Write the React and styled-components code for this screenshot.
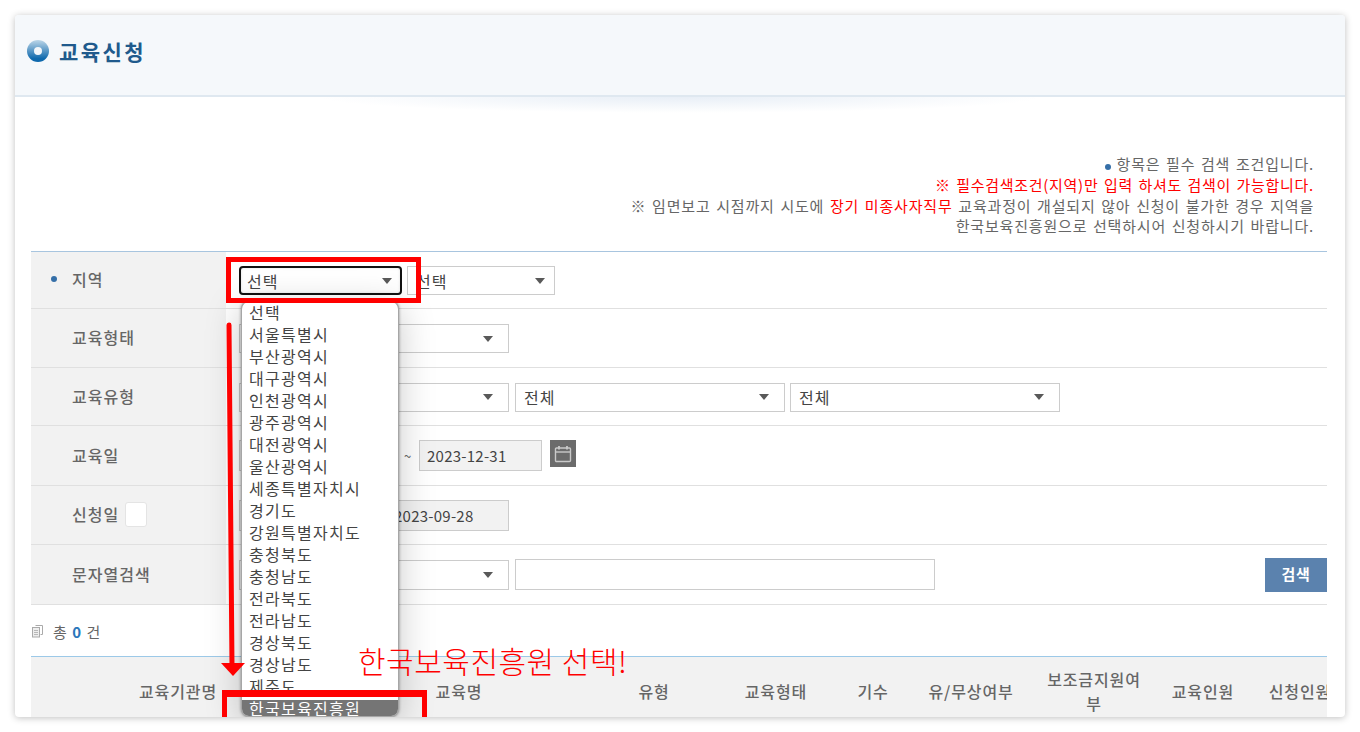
import React from 'react'
import styled, { createGlobalStyle } from 'styled-components'

const GlobalStyle = createGlobalStyle`
  html, body {
    margin: 0;
    height: 100%;
    overflow: hidden;
    background: #fff;
  }
  * { box-sizing: border-box; }
  body {
    font-family: "Noto Sans CJK KR", "Noto Sans", sans-serif;
    color: #555;
  }
`

const Page = styled.div`
  padding: 15px;
`
const Card = styled.div`
  position: relative;
  height: 702px;
  overflow: hidden;
  background: #fff;
  border-radius: 4px;
  box-shadow: 0 1px 7px rgba(0, 0, 0, 0.25);
`
const Header = styled.header`
  position: relative;
  height: 82px;
  display: flex;
  align-items: center;
  gap: 10px;
  padding: 0 12px 9px;
  background: #f5f8fb;
  border-bottom: 2px solid #dfe8f0;
  &::after {
    content: "";
    position: absolute;
    left: 300px;
    right: 300px;
    top: 82px;
    height: 16px;
    background: radial-gradient(ellipse at top, rgba(150, 180, 215, 0.22), rgba(255, 255, 255, 0) 70%);
  }
`
const Ring = styled.span`
  width: 22px;
  height: 22px;
  border-radius: 50%;
  display: flex;
  align-items: center;
  justify-content: center;
  background: linear-gradient(#bcd6e8, #0f69ad 85%);
  &::before {
    content: "";
    width: 8px;
    height: 8px;
    border-radius: 50%;
    background: #f2f6fa;
  }
`
const Title = styled.h1`
  margin: 0;
  font-size: 21px;
  font-weight: 700;
  letter-spacing: 2.4px;
  color: #205a8c;
`
const Main = styled.main`
  padding: 0 18px 0 16px;
`
const Notes = styled.div`
  padding: 57px 13px 14px 0;
  text-align: right;
  font-size: 15px;
  line-height: 20.75px;
  color: #666;
  letter-spacing: 0.82px;
  word-spacing: 1.5px;
`
const Red = styled.span`
  color: #f00;
  letter-spacing: ${(p) => (p.$tight ? '0.7px' : 'inherit')};
`
const Bullet = styled.i`
  display: inline-block;
  width: 6px;
  height: 6px;
  border-radius: 50%;
  background: #356fa8;
`
const Form = styled.div`
  border-top: 1px solid #a8c5df;
`
const Row = styled.div`
  display: flex;
  height: ${(p) => p.$h}px;
  border-bottom: 1px solid #e0e0e0;
`
const Label = styled.div`
  width: 195px;
  flex: none;
  display: flex;
  align-items: center;
  gap: ${(p) => (p.$required ? 15 : 6)}px;
  padding-left: ${(p) => (p.$required ? 20 : 41)}px;
  padding-bottom: 2px;
  background: #f2f2f2;
  font-size: 16px;
  font-weight: 500;
  letter-spacing: 1.05px;
  color: #666;
`
const Check = styled.span`
  width: 22px;
  height: 25px;
  background: #fff;
  border: 1px solid #e4e4e4;
  border-radius: 3px;
`
const Field = styled.div`
  flex: 1;
  display: flex;
  align-items: center;
  gap: 6px;
  padding-left: 13px;
`
const Select = styled.div`
  width: ${(p) => p.$w}px;
  height: ${(p) => (p.$flush ? 30 : 29)}px;
  flex: none;
  display: flex;
  align-items: center;
  justify-content: space-between;
  margin-top: ${(p) => (p.$flush ? 0 : 1)}px;
  margin-left: ${(p) => p.$ml || 0}px;
  padding: 0 ${(p) => p.$pr || 15}px 0 ${(p) => (p.$focus ? 6 : 8)}px;
  background: #fff;
  border: ${(p) => (p.$focus ? '2px solid #111' : '1px solid #ccc')};
  border-radius: ${(p) => (p.$focus ? 4 : 0)}px;
  box-shadow: ${(p) => (p.$focus ? 'inset 0 0 3px rgba(0, 0, 0, 0.12)' : 'none')};
  font-size: 16px;
  letter-spacing: 1px;
  color: #444;
`
const Caret = styled.span`
  width: 0;
  height: 0;
  border-left: 5px solid transparent;
  border-right: 5px solid transparent;
  border-top: 6px solid #595959;
`
const DateInput = styled.div`
  width: ${(p) => p.$w || 123}px;
  height: 31px;
  flex: none;
  display: flex;
  align-items: center;
  padding-left: 7px;
  background: #f2f2f2;
  border: 1px solid #ccc;
  font-size: 15px;
  letter-spacing: 0.25px;
  color: #444;
`
const Tilde = styled.span`
  width: 11px;
  flex: none;
  text-align: center;
  font-size: 13px;
  color: #666;
`
const CalButton = styled.span`
  width: 26px;
  height: 27px;
  flex: none;
  display: flex;
  align-items: center;
  justify-content: center;
  margin: 0 0 4px 2px;
  background: #6b6b6b;
`
const TextInput = styled.div`
  width: 420px;
  height: 31px;
  background: #fff;
  border: 1px solid #ccc;
`
const SearchButton = styled.button`
  width: 62px;
  height: 34px;
  margin-left: auto;
  padding: 0 0 3px;
  border: 0;
  background: #5b82ae;
  color: #fff;
  font-family: inherit;
  font-size: 15px;
  font-weight: 700;
  letter-spacing: 0.6px;
`
const Total = styled.div`
  height: 51px;
  display: flex;
  align-items: center;
  gap: 9px;
  padding-top: 1px;
  font-size: 15px;
  color: #666;
  letter-spacing: 1px;
  b {
    color: #2a77bb;
  }
`
const TableHead = styled.div`
  display: flex;
  height: 70px;
  overflow: hidden;
  background: #f2f2f2;
  border-top: 1px solid #9cc9e8;
`
const Th = styled.div`
  width: ${(p) => p.$w}px;
  flex: none;
  display: flex;
  align-items: center;
  justify-content: center;
  padding: 0 10px 2px;
  text-align: center;
  font-size: 16px;
  line-height: 24px;
  font-weight: 500;
  letter-spacing: 0.9px;
  color: #666;
`

// things drawn over the form: the open list and the red marks
const Dropdown = styled.ul`
  position: absolute;
  left: 226px;
  top: 286px;
  width: 158px;
  height: 416px;
  margin: 0;
  padding: 0;
  list-style: none;
  overflow: hidden;
  background: #fff;
  border: 1px solid #a6a6a6;
  border-top-color: #bbb;
  border-radius: 8px;
  box-shadow: 0 0 3px rgba(0, 0, 0, 0.45), 0 6px 36px rgba(0, 0, 0, 0.22);
`
const Option = styled.li`
  height: 22px;
  margin-top: ${(p) => (p.$selected ? 2 : 0)}px;
  padding-left: 7px;
  font-size: 16px;
  line-height: ${(p) => (p.$selected ? 17 : 21)}px;
  letter-spacing: 1.3px;
  white-space: nowrap;
  color: ${(p) => (p.$selected ? '#fff' : '#444')};
  background: ${(p) => (p.$selected ? '#757575' : 'transparent')};
`
const RedBox = styled.div`
  position: absolute;
  left: ${(p) => p.$x}px;
  top: ${(p) => p.$y}px;
  width: ${(p) => p.$w}px;
  height: ${(p) => p.$h}px;
  border: 5px solid #f00;
  border-top-width: ${(p) => p.$top}px;
`
const Arrow = styled.svg`
  position: absolute;
  left: 0;
  top: 0;
`
const Callout = styled.div`
  position: absolute;
  left: 343px;
  top: 622px;
  font-size: 30px;
  line-height: 46px;
  font-weight: 300;
  letter-spacing: 0.5px;
  white-space: nowrap;
  color: #f00;
`

const regions = ['선택', '서울특별시', '부산광역시', '대구광역시', '인천광역시', '광주광역시', '대전광역시', '울산광역시', '세종특별자치시', '경기도', '강원특별자치도', '충청북도', '충청남도', '전라북도', '전라남도', '경상북도', '경상남도', '제주도', '한국보육진흥원']

const columns = [
  ['교육기관명', 294],
  ['교육명', 268],
  ['유형', 122],
  ['교육형태', 122],
  ['기수', 72],
  ['유/무상여부', 124],
  ['보조금지원여부', 122],
  ['교육인원', 96],
  ['신청인원', 98],
]

const CalendarIcon = () => (
  <svg width="18" height="18" viewBox="0 0 18 18" fill="none" stroke="#c9c9c9" strokeWidth="1.4">
    <rect x="1.5" y="3" width="15" height="13.5" rx="1" />
    <path d="M1.5 7h15" />
    <path d="M5 1v3.5M13 1v3.5" strokeWidth="1.8" />
  </svg>
)

const DocsIcon = () => (
  <svg width="13" height="14" viewBox="0 0 13 14" fill="none" stroke="#aaa">
    <path d="M4.5 1.5h7v9h-2" />
    <rect x="1.5" y="3.5" width="7" height="9.5" fill="#eee" />
    <path d="M3 6.5h4M3 8.5h4M3 10.5h4" strokeWidth="0.8" />
  </svg>
)

const App = () => {
  return (
    <Page>
      <GlobalStyle />
      <Card>
        <Header>
          <Ring />
          <Title>교육신청</Title>
        </Header>
        <Main>
          <Notes>
            <div><Bullet /> 항목은 필수 검색 조건입니다.</div>
            <div><Red $tight>※ 필수검색조건(지역)만 입력 하셔도 검색이 가능합니다.</Red></div>
            <div>※ 임면보고 시점까지 시도에 <Red>장기 미종사자직무</Red> 교육과정이 개설되지 않아 신청이 불가한 경우 지역을</div>
            <div>한국보육진흥원으로 선택하시어 신청하시기 바랍니다.</div>
          </Notes>
          <Form>
            <Row $h={57}>
              <Label $required><Bullet />지역</Label>
              <Field>
                <Select $w={163} $focus $pr={8}>선택<Caret /></Select>
                <Select $w={148} $pr={9} $ml={-1}>선택<Caret /></Select>
              </Field>
            </Row>
            <Row $h={59}>
              <Label>교육형태</Label>
              <Field>
                <Select $w={270}>전체<Caret /></Select>
              </Field>
            </Row>
            <Row $h={58}>
              <Label>교육유형</Label>
              <Field>
                <Select $w={270}>전체<Caret /></Select>
                <Select $w={270}>전체<Caret /></Select>
                <Select $w={270} $ml={-1}>전체<Caret /></Select>
              </Field>
            </Row>
            <Row $h={60}>
              <Label>교육일</Label>
              <Field>
                <DateInput>2023-01-01</DateInput>
                <CalButton><CalendarIcon /></CalButton>
                <Tilde>~</Tilde>
                <DateInput>2023-12-31</DateInput>
                <CalButton><CalendarIcon /></CalButton>
              </Field>
            </Row>
            <Row $h={59}>
              <Label>신청일<Check /></Label>
              <Field>
                <DateInput $w={124}>2023-09-28</DateInput>
                <Tilde>~</Tilde>
                <DateInput>2023-09-28</DateInput>
              </Field>
            </Row>
            <Row $h={60}>
              <Label>문자열검색</Label>
              <Field>
                <Select $w={270} $flush>전체<Caret /></Select>
                <TextInput />
                <SearchButton>검색</SearchButton>
              </Field>
            </Row>
          </Form>
          <Total>
            <DocsIcon />
            <span>총 <b>0</b> 건</span>
          </Total>
          <TableHead>
            {columns.map(([name, w]) => (
              <Th key={name} $w={w}>{name}</Th>
            ))}
          </TableHead>
        </Main>

        <Dropdown>
          {regions.map((r) => (
            <Option key={r} $selected={r === '한국보육진흥원'}>{r}</Option>
          ))}
        </Dropdown>
        <RedBox $x={211} $y={242} $w={195} $h={46} $top={5} />
        <RedBox $x={207} $y={675} $w={205} $h={60} $top={7} />
        <Arrow width="260" height="680" viewBox="15 15 260 680">
          <path d="M229 325L232 665" stroke="#f00" strokeWidth="5" strokeLinecap="round" />
          <path d="M221 663L245 663L233 676Z" fill="#f00" />
        </Arrow>
        <Callout>한국보육진흥원 선택!</Callout>
      </Card>
    </Page>
  )
}

export default App
